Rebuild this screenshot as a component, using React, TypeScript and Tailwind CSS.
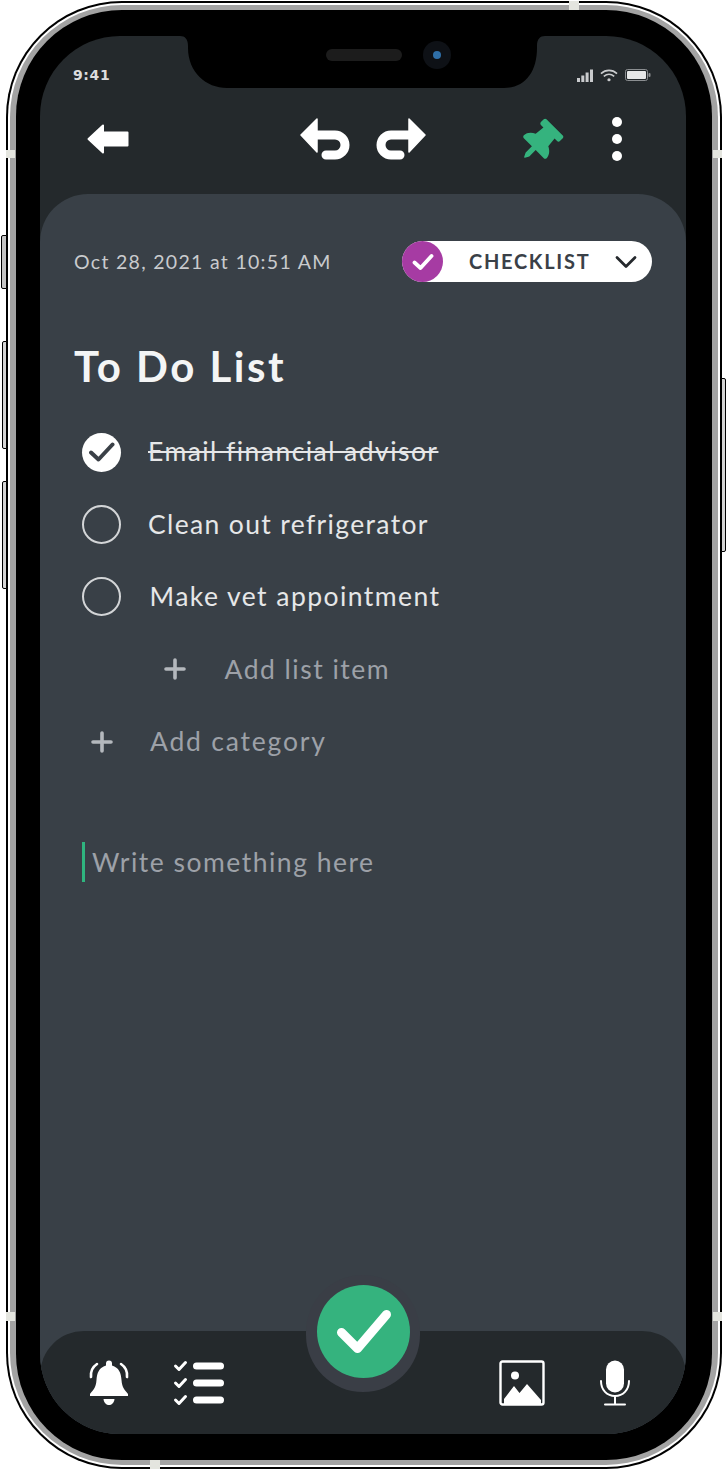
import React from 'react';
import { FaThumbtack } from 'react-icons/fa';

const BackIcon = () => (
  <svg width="42" height="30" viewBox="0 0 42 30" className="shrink-0">
    <path d="M1.5 15 L16 1.5 V8.5 H40.5 V21.5 H16 V28.5 Z" fill="#fff" stroke="#fff" strokeWidth="2" strokeLinejoin="round" />
  </svg>
);

const UndoIcon = () => (
  <svg width="50" height="42" viewBox="0 0 50 42" className="shrink-0">
    <path d="M1 17 L17 1 V34 Z" fill="#fff" stroke="#fff" strokeWidth="1.5" strokeLinejoin="round" />
    <path d="M12 17 H35 A10 10 0 0 1 35 37 H26" fill="none" stroke="#fff" strokeWidth="9" strokeLinecap="round" />
  </svg>
);

const BellIcon = () => (
  <svg width="42" height="46" viewBox="0 0 42 46" className="shrink-0">
    <path d="M21 0.5 a3 3 0 0 1 3 3 v2 C31 7.5 33 13 33.5 20 C34 28 37 30 40 34 V36 H2 V34 C5 30 8 28 8.5 20 C9 13 11 7.5 18 5.5 v-2 a3 3 0 0 1 3 -3 Z" fill="#fff" />
    <path d="M15.5 39 H26.5 C26 43 23.5 45 21 45 C18.5 45 16 43 15.5 39 Z" fill="#fff" />
    <path d="M9 4 C4.5 7 2.5 12 3 17" fill="none" stroke="#fff" strokeWidth="2.6" strokeLinecap="round" />
    <path d="M33 4 C37.5 7 39.5 12 39 17" fill="none" stroke="#fff" strokeWidth="2.6" strokeLinecap="round" />
  </svg>
);

const ChecksIcon = () => (
  <svg width="52" height="46" viewBox="0 0 52 46" className="shrink-0">
    {[6, 23, 40].map((y) => (
      <g key={y}>
        <path d={`M2.5 ${y} L6 ${y + 3.5} L12.5 ${y - 3.5}`} fill="none" stroke="#fff" strokeWidth="3" strokeLinecap="round" strokeLinejoin="round" />
        <rect x="20" y={y - 3.5} width="31" height="7" rx="3.5" fill="#fff" />
      </g>
    ))}
  </svg>
);

const ImageIcon = () => (
  <svg width="46" height="46" viewBox="0 0 46 46" className="shrink-0">
    <rect x="1.5" y="1.5" width="43" height="43" rx="2" fill="none" stroke="#fff" strokeWidth="2.4" />
    <circle cx="16" cy="15.5" r="4" fill="#fff" />
    <path d="M5 39 L15 26 L20.5 33 L28 24 L42 40 V44 H5 Z" fill="#fff" />
  </svg>
);

const MicIcon = () => (
  <svg width="32" height="46" viewBox="0 0 32 46" className="shrink-0">
    <rect x="7" y="0.5" width="18" height="32" rx="9" fill="#fff" />
    <path d="M2 21 C2 30 8 36 16 36 C24 36 30 30 30 21" fill="none" stroke="#fff" strokeWidth="2" strokeLinecap="round" />
    <path d="M16 36 V44 M6 44.5 H26" fill="none" stroke="#fff" strokeWidth="2" strokeLinecap="round" />
  </svg>
);

const PlusIcon = () => (
  <svg width="22" height="22" viewBox="0 0 22 22" className="shrink-0">
    <path d="M11 2 V20 M2 11 H20" stroke="#b4b8bd" strokeWidth="3.6" strokeLinecap="round" />
  </svg>
);

const StatusIcons = () => (
  <div className="flex items-center gap-[7px]">
    <svg width="16" height="13" viewBox="0 0 16 13">
      <rect x="0" y="9" width="3" height="4" fill="#c9cbcd" />
      <rect x="4.3" y="6.5" width="3" height="6.5" fill="#c9cbcd" />
      <rect x="8.6" y="3.5" width="3" height="9.5" fill="#c9cbcd" />
      <rect x="13" y="0.5" width="3" height="12.5" fill="#c9cbcd" />
    </svg>
    <svg width="18" height="13" viewBox="0 0 19 13" fill="none" stroke="#c9cbcd" strokeWidth="1.7">
      <path d="M1 4.5 C6 0 13 0 18 4.5" />
      <path d="M4 7.5 C7.5 4.5 11.5 4.5 15 7.5" />
      <circle cx="9.5" cy="11" r="1.7" fill="#c9cbcd" stroke="none" />
    </svg>
    <svg width="26" height="12" viewBox="0 0 26 12">
      <rect x="0.5" y="0.5" width="22" height="11" rx="2" fill="none" stroke="#8b8e91" />
      <rect x="2" y="2" width="19" height="8" rx="1" fill="#e6e7e8" />
      <rect x="23.5" y="4" width="2" height="4" rx="1" fill="#8b8e91" />
    </svg>
  </div>
);

const items = [
  { label: 'Email financial advisor', done: true, style: 'ml-[27px] tracking-[1.45px]' },
  { label: 'Clean out refrigerator', done: false, style: 'ml-[27px] tracking-[1.35px]' },
  { label: 'Make vet appointment', done: false, style: 'ml-[28.5px] tracking-[1.45px]' },
];

export default function App() {
  return (
    <div className="relative w-[727px] h-[1470px] bg-white pl-[6px] pt-[1px] overflow-hidden" style={{ fontFamily: 'Lato, "Noto Sans", sans-serif' }}>
      {/* side buttons */}
      <div className="absolute left-[1px] top-[235px] w-[6px] h-[54px] rounded-l-[2px] border border-black bg-[#c4c4c4]" />
      <div className="absolute left-[2px] top-[341px] w-[5px] h-[108px] rounded-l-[2px] border border-black bg-[#d4d4d4]" />
      <div className="absolute left-[2px] top-[481px] w-[5px] h-[108px] rounded-l-[2px] border border-black bg-[#d4d4d4]" />
      <div className="absolute left-[721px] top-[378px] w-[5px] h-[174px] rounded-r-[2px] border border-black bg-[#d4d4d4]" />

      {/* phone frame */}
      <div className="w-[716px] h-[1468px] rounded-[116px] bg-black p-[2px]">
        <div className="w-full h-full rounded-[114px] bg-white p-[2px]">
          <div className="w-full h-full rounded-[112px] bg-[#a3a3a3] px-[6px] py-[5px]">
            <div className="w-full h-full rounded-[106px] bg-black pl-[24px] pr-[26px] pt-[26px] pb-[26px]">
              <div className="relative w-[646px] h-[1398px] rounded-[80px] bg-[#24292c] overflow-hidden flex flex-col">
                {/* header */}
                <div className="h-[158px] shrink-0 flex flex-col">
                  <div className="flex items-center justify-between h-[14px] mt-[32px] pl-[33px] pr-[35px]">
                    <span className="text-[14px] font-bold text-[#dcdddf] tracking-[0.6px]" style={{ fontFamily: '"DejaVu Sans", sans-serif' }}>9:41</span>
                    <StatusIcons />
                  </div>
                  <div className="flex items-center mt-[36px] h-[42px]">
                    <div className="ml-[47px]"><BackIcon /></div>
                    <div className="ml-[171px]"><UndoIcon /></div>
                    <div className="ml-[26px] -scale-x-100"><UndoIcon /></div>
                    <div className="ml-[96px] w-[44px] flex justify-center">
                      <FaThumbtack className="rotate-45 text-[#35b37e] w-[43px] h-[43px] translate-y-[3px] -translate-x-[5px]" />
                    </div>
                    <div className="ml-[46px] flex flex-col gap-[7px]">
                      <span className="block w-[10px] h-[10px] rounded-full bg-white" />
                      <span className="block w-[10px] h-[10px] rounded-full bg-white" />
                      <span className="block w-[10px] h-[10px] rounded-full bg-white" />
                    </div>
                  </div>
                </div>

                {/* note body */}
                <div className="flex-1 flex flex-col rounded-t-[48px] bg-[#394047]">
                  <div className="flex-1 pt-[47px] pl-[34px] pr-[34px]">
                    <div className="flex items-center justify-between h-[41px]">
                      <span className="text-[19.5px] text-[#c9cbce] tracking-[1.3px]">Oct 28, 2021 at 10:51 AM</span>
                      <div className="flex items-center w-[250px] h-[41px] rounded-full bg-white shrink-0">
                        <div className="w-[41px] h-[41px] rounded-full bg-[#a63ba3] flex items-center justify-center">
                          <svg width="24" height="20" viewBox="0 0 24 20">
                            <path d="M3.5 10.5 L9.5 16 L20.5 4" fill="none" stroke="#fff" strokeWidth="3.8" strokeLinecap="round" strokeLinejoin="round" />
                          </svg>
                        </div>
                        <span className="ml-[26px] pb-[2px] text-[20px] font-bold text-[#3a4047] tracking-[1.7px]">CHECKLIST</span>
                        <svg width="22" height="14" viewBox="0 0 22 14" className="ml-[25px]">
                          <path d="M2 2.5 L11 11.5 L20 2.5" fill="none" stroke="#25292d" strokeWidth="2.8" strokeLinecap="round" strokeLinejoin="round" />
                        </svg>
                      </div>
                    </div>

                    <h1 className="mt-[59px] h-[50px] leading-[50px] text-[42px] font-bold text-[#f4f5f5] tracking-[2.5px]">To Do List</h1>

                    <div className="mt-[25px] pl-[8px]">
                      {items.map((item) => (
                        <div key={item.label} className="flex items-center h-[72.25px]">
                          {item.done ? (
                            <div className="w-[39px] h-[39px] rounded-full bg-white flex items-center justify-center shrink-0">
                              <svg width="26" height="22" viewBox="0 0 26 22">
                                <path d="M2 11.5 L9.5 18.5 L23.5 3.5" fill="none" stroke="#3a4047" strokeWidth="4" strokeLinecap="round" strokeLinejoin="round" />
                              </svg>
                            </div>
                          ) : (
                            <div className="w-[39px] h-[39px] rounded-full border-2 border-[#d3d5d7] shrink-0" />
                          )}
                          <span className={`${item.style} text-[26.5px] text-[#e6e7e8] ${item.done ? 'line-through' : ''}`}>{item.label}</span>
                        </div>
                      ))}
                      <div className="flex items-center h-[72.25px] pl-[73.5px]">
                        <div className="w-[39px] flex justify-center shrink-0"><PlusIcon /></div>
                        <span className="ml-[30px] pt-[1px] text-[26.5px] text-[#9da1a8] tracking-[1.5px]">Add list item</span>
                      </div>
                      <div className="flex items-center h-[72.25px]">
                        <div className="w-[39px] flex justify-center shrink-0 pt-[2px]"><PlusIcon /></div>
                        <span className="ml-[29px] pt-[1px] text-[26.5px] text-[#9da1a8] tracking-[1.8px]">Add category</span>
                      </div>

                      <div className="flex items-center mt-[65px] h-[40px]">
                        <div className="w-[3px] h-[40px] bg-[#2fb57f] shrink-0" />
                        <span className="ml-[7px] pt-[1px] text-[26.5px] text-[#9da1a8] tracking-[1.5px]">Write something here</span>
                      </div>
                    </div>
                  </div>

                  {/* bottom toolbar */}
                  <div className="h-[103px] shrink-0 rounded-t-[44px] bg-[#24292c] flex items-start justify-between pt-[29px] pl-[48px] pr-[55px]">
                    <div className="flex items-center gap-[43px]">
                      <BellIcon />
                      <ChecksIcon />
                    </div>
                    <div className="flex items-center gap-[54px]">
                      <ImageIcon />
                      <MicIcon />
                    </div>
                  </div>
                </div>

                {/* save button */}
                <div className="absolute left-[266px] top-[1239px] w-[114px] h-[117px] rounded-full bg-[#3a3e46] pt-[10px] flex justify-center">
                  <div className="w-[93px] h-[93px] rounded-full bg-[#35b37e] flex items-center justify-center">
                    <svg width="60" height="50" viewBox="0 0 60 50">
                      <path d="M8.5 25.5 L24.5 41.5 L53.5 7.5" fill="none" stroke="#fff" strokeWidth="9" strokeLinecap="round" strokeLinejoin="round" />
                    </svg>
                  </div>
                </div>

                {/* notch */}
                <svg width="366" height="52" viewBox="0 0 366 52" className="absolute left-[140px] top-0">
                  <path d="M0 0 C5 0 8 3 8 10 V12 C8 36 26 52 47 52 H324 C345 52 357 36 357 12 V10 C357 3 360 0 365 0 Z" fill="#000" />
                  <rect x="146" y="13" width="76" height="12" rx="6" fill="#1c1c1c" />
                  <circle cx="257" cy="19" r="14" fill="#0e1116" />
                  <circle cx="257" cy="19" r="4" fill="#2f6fa8" />
                </svg>
              </div>
            </div>
          </div>
        </div>
      </div>

      {/* antenna bands */}
      <div className="absolute left-[6px] top-[150px] w-[9px] h-[8px] bg-[#e4e5df]" />
      <div className="absolute left-[713px] top-[150px] w-[9px] h-[8px] bg-[#e4e5df]" />
      <div className="absolute left-[6px] top-[1312px] w-[9px] h-[9px] bg-[#e4e5df]" />
      <div className="absolute left-[713px] top-[1312px] w-[9px] h-[9px] bg-[#e4e5df]" />
      <div className="absolute left-[569px] top-[1px] w-[10px] h-[9px] bg-[#e4e5df]" />
      <div className="absolute left-[150px] top-[1460px] w-[10px] h-[9px] bg-[#e4e5df]" />
    </div>
  );
}
